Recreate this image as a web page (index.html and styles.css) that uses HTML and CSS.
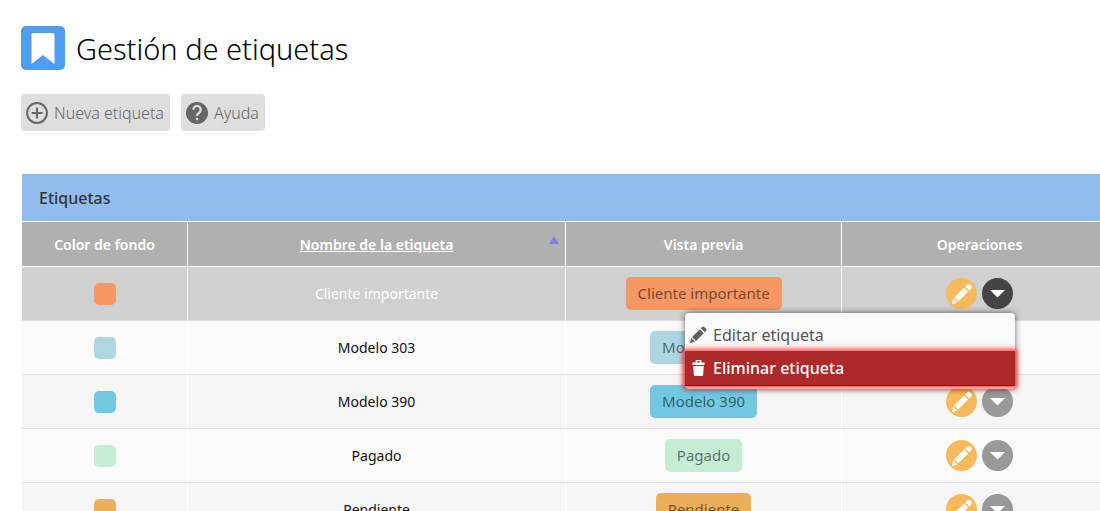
FILE: index.html
```html
<!DOCTYPE html>
<html lang="es">
<head>
  <meta charset="UTF-8" />
  <title>Gestión de etiquetas</title>
  <meta name="viewport" content="width=device-width, initial-scale=1.0">
  <link rel="stylesheet" href="styles.css">
</head>
<body>
  <!-- shared icons -->
  <svg class="sprite" aria-hidden="true">
    <symbol id="pencil" viewBox="0 0 31 31">
      <path d="M6 26l1.200-5.500 4 4z M8.200 19.500l10-10 4 4-10 10z M19.300 8.400l1.500-1.500a2.800 2.800 0 0 1 4 4l-1.500 1.500z" fill="currentColor"/>
    </symbol>
    <symbol id="arrow" viewBox="0 0 31 31">
      <path d="M8 12h15l-7.500 7.500z" fill="currentColor"/>
    </symbol>
  </svg>

  <header class="page-header">
    <svg class="logo" viewBox="0 0 44 44" aria-hidden="true">
      <rect width="44" height="44" rx="5" fill="#4f9cf0"/>
      <path d="M12 7h20a1.500 1.500 0 0 1 1.500 1.500V38L22 29 10.500 38V8.500A1.500 1.500 0 0 1 12 7z" fill="#fff"/>
    </svg>
    <h1>Gestión de etiquetas</h1>
  </header>

  <div class="toolbar">
    <button type="button" class="tool">
      <svg viewBox="0 0 22 22" aria-hidden="true">
        <circle cx="11" cy="11" r="9.900" fill="none" stroke="#666" stroke-width="2"/>
        <path d="M11 5.500v11M5.500 11h11" stroke="#666" stroke-width="2"/>
      </svg>
      Nueva etiqueta
    </button>
    <button type="button" class="tool">
      <svg viewBox="0 0 22 22" aria-hidden="true">
        <circle cx="11" cy="11" r="11" fill="#666"/>
        <path d="M7.300 7.800a3.700 3.700 0 1 1 5.900 2.800c-1.400 1-2.200 1.600-2.200 3.400" fill="none" stroke="#dedede" stroke-width="2.200"/>
        <path d="M9.900 16h2.200v2.200h-2.200z" fill="#dedede"/>
      </svg>
      Ayuda
    </button>
  </div>

  <div class="panel">
    <h2>Etiquetas</h2>
    <table>
      <colgroup><col class="col-color"><col class="col-name"><col class="col-view"><col class="col-ops"></colgroup>
      <thead>
        <tr>
          <th>Color de fondo</th>
          <th class="sorted"><div><a href="#">Nombre de la etiqueta</a></div></th>
          <th>Vista previa</th>
          <th>Operaciones</th>
        </tr>
      </thead>
      <tbody>
        <tr class="active">
          <td><span class="swatch orange"></span></td>
          <td>Cliente importante</td>
          <td><span class="tag orange">Cliente importante</span></td>
          <td>
            <div class="ops">
              <button type="button" class="edit" aria-label="Editar"><svg><use href="#pencil"/></svg></button>
              <button type="button" class="more" aria-label="Más operaciones"><svg><use href="#arrow"/></svg></button>
              <div class="menu">
                <button type="button">
                  <svg viewBox="0 0 18 18" aria-hidden="true">
                    <path d="M0 17l1.200-5 3.800 3.800z M2 11l7.800-7.800 4 4L6 15z M10.800 2.200l1.200-1.200a1.600 1.600 0 0 1 2.200 0l1.800 1.800a1.600 1.600 0 0 1 0 2.200l-1.200 1.200z" fill="#5f5f5f"/>
                  </svg>
                  Editar etiqueta
                </button>
                <button type="button" class="danger">
                  <svg viewBox="0 0 18 18" aria-hidden="true">
                    <path d="M2.500 3.500h3v-1.500a1 1 0 0 1 1-1h4a1 1 0 0 1 1 1v1.500h3v2.500h-12z M7 2.300v1.200h3v-1.200z M3.200 7h10.600l-.6 8.500a1.500 1.500 0 0 1-1.500 1.500H5.300a1.500 1.500 0 0 1-1.500-1.500z" fill="#fff" fill-rule="evenodd"/>
                  </svg>
                  Eliminar etiqueta
                </button>
              </div>
            </div>
          </td>
        </tr>
        <tr>
          <td><span class="swatch pale-blue"></span></td>
          <td>Modelo 303</td>
          <td><span class="tag pale-blue">Modelo 303</span></td>
          <td>
            <div class="ops">
              <button type="button" class="edit" aria-label="Editar"><svg><use href="#pencil"/></svg></button>
              <button type="button" class="more" aria-label="Más operaciones"><svg><use href="#arrow"/></svg></button>
            </div>
          </td>
        </tr>
        <tr>
          <td><span class="swatch blue"></span></td>
          <td>Modelo 390</td>
          <td><span class="tag blue">Modelo 390</span></td>
          <td>
            <div class="ops">
              <button type="button" class="edit" aria-label="Editar"><svg><use href="#pencil"/></svg></button>
              <button type="button" class="more" aria-label="Más operaciones"><svg><use href="#arrow"/></svg></button>
            </div>
          </td>
        </tr>
        <tr>
          <td><span class="swatch green"></span></td>
          <td>Pagado</td>
          <td><span class="tag green">Pagado</span></td>
          <td>
            <div class="ops">
              <button type="button" class="edit" aria-label="Editar"><svg><use href="#pencil"/></svg></button>
              <button type="button" class="more" aria-label="Más operaciones"><svg><use href="#arrow"/></svg></button>
            </div>
          </td>
        </tr>
        <tr>
          <td><span class="swatch amber"></span></td>
          <td>Pendiente</td>
          <td><span class="tag amber">Pendiente</span></td>
          <td>
            <div class="ops">
              <button type="button" class="edit" aria-label="Editar"><svg><use href="#pencil"/></svg></button>
              <button type="button" class="more" aria-label="Más operaciones"><svg><use href="#arrow"/></svg></button>
            </div>
          </td>
        </tr>
      </tbody>
    </table>
  </div>
</body>
</html>
```

FILE: styles.css
```css
body {
  font-family: 'Noto Sans', 'Open Sans', Arial, sans-serif;
  font-size: 14px;
  margin: 0;
  background: #fff;
  color: #111;
  overflow-x: hidden;
}
.sprite {
  position: absolute;
  width: 0;
  height: 0;
}
button {
  font-family: inherit;
  border: none;
  cursor: pointer;
}
.page-header {
  display: flex;
  align-items: flex-start;
  gap: 11px;
  padding: 26px 21px 0;
}
.logo {
  width: 44px;
  height: 44px;
}
h1 {
  margin: 0;
  font-size: 29px;
  line-height: 46px;
  font-weight: 350;
  color: #000;
}
.toolbar {
  display: flex;
  gap: 11px;
  padding: 22px 21px 43px;
}
.tool {
  display: flex;
  align-items: center;
  gap: 6px;
  height: 37px;
  padding: 0 6px 0 5px;
  background: #dedede;
  border-radius: 4px;
  font-size: 16px;
  font-weight: 300;
  line-height: 20px;
  color: #666;
}
.tool svg {
  width: 22px;
  height: 22px;
}

/* table */
.panel {
  margin: 0 -18px 0 22px;
}
h2 {
  margin: 0;
  padding: 1px 17px 0;
  background: #90bdee;
  border-bottom: 1px solid #fff;
  font-size: 16px;
  line-height: 46px;
  font-weight: 500;
  color: #333;
}
table {
  width: 100%;
  table-layout: fixed;
  border-collapse: separate;
  border-spacing: 0;
}
.col-color { width: 166px; }
.col-name { width: 34.5%; }
th, td {
  box-sizing: border-box;
  padding: 0;
  text-align: center;
  border-right: 1px solid #fff;
}
th {
  height: 45px;
  background: #b0b0b0;
  border-bottom: 1px solid #fff;
  color: #fff;
  font-weight: 600;
}
th a {
  color: inherit;
}
.sorted div {
  position: relative;
}
.sorted div::after {
  content: '';
  position: absolute;
  top: 1px;
  right: 6px;
  border: 5px solid transparent;
  border-top: 0;
  border-bottom: 8px solid #7f7fdc;
}
td {
  height: 54px;
  background: #fafafa;
  border-bottom: 1px solid #dedede;
}
tr:nth-child(odd) td { background: #f5f5f5; }
tr.active td {
  background: #d0d0d0;
  color: #fff;
}
.swatch {
  display: block;
  width: 22px;
  height: 22px;
  margin: 0 auto;
  border-radius: 5px;
}
.tag {
  display: inline-block;
  vertical-align: middle;
  padding: 0 12px;
  border-radius: 5px;
  font-size: 15px;
  line-height: 33px;
  color: rgba(0, 0, 0, 0.55);
}
.orange { background: #f69764; }
.pale-blue { background: #add6e2; }
.blue { background: #70c8e1; }
.green { background: #c5edd6; }
.amber { background: #ebae5a; }

.ops {
  position: relative;
  display: flex;
  width: 67px;
  margin: 0 auto;
  gap: 5px;
}
.edit, .more {
  width: 31px;
  height: 31px;
  padding: 0;
  border-radius: 50%;
  background: #f6ba5c;
  color: #fff;
}
.more { background: #999; }
.active .more { background: #444; }
.edit svg, .more svg {
  display: block;
  width: 31px;
  height: 31px;
}

/* drop-down menu */
.menu {
  position: absolute;
  z-index: 2;
  top: 35px;
  right: -2px;
  width: 330px;
  padding: 5px 0 3px;
  box-sizing: border-box;
  background: #fafafa;
  border-radius: 4px;
  box-shadow: 0 0 6px rgba(0, 0, 0, 0.6);
}
.menu button {
  display: flex;
  align-items: center;
  gap: 5px;
  width: 100%;
  height: 33px;
  padding: 0 5px;
  background: none;
  font-size: 16px;
  color: #555;
}
.menu svg {
  width: 18px;
  height: 18px;
}
.menu .danger {
  height: 35px;
  background: #ad292a;
  border-bottom: 1px solid #8e0f10;
  box-shadow: 0 0 5px 2px #ff3c3c;
  font-weight: 500;
  color: #fff;
}
```
